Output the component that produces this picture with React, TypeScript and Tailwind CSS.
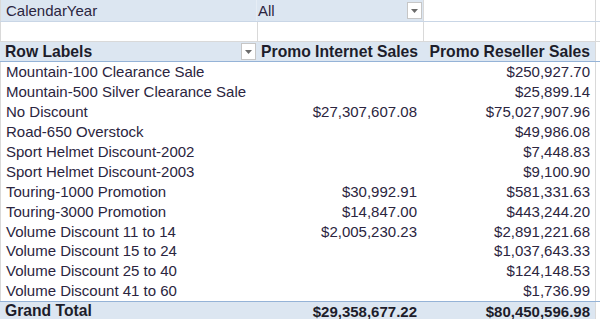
const rows: [string, string, string][] = [
  ["Mountain-100 Clearance Sale", "", "$250,927.70"],
  ["Mountain-500 Silver Clearance Sale", "", "$25,899.14"],
  ["No Discount", "$27,307,607.08", "$75,027,907.96"],
  ["Road-650 Overstock", "", "$49,986.08"],
  ["Sport Helmet Discount-2002", "", "$7,448.83"],
  ["Sport Helmet Discount-2003", "", "$9,100.90"],
  ["Touring-1000 Promotion", "$30,992.91", "$581,331.63"],
  ["Touring-3000 Promotion", "$14,847.00", "$443,244.20"],
  ["Volume Discount 11 to 14", "$2,005,230.23", "$2,891,221.68"],
  ["Volume Discount 15 to 24", "", "$1,037,643.33"],
  ["Volume Discount 25 to 40", "", "$124,148.53"],
  ["Volume Discount 41 to 60", "", "$1,736.99"],
]

function Dropdown() {
  return (
    <div className="flex h-[17px] w-[15px] shrink-0 items-center justify-center border border-[#c6c6c6] bg-white">
      <svg width="7" height="4" viewBox="0 0 7 4">
        <path d="M0 0h7L3.5 4z" fill="#6b6b6b" />
      </svg>
    </div>
  )
}

export default function App() {
  const cols = "grid grid-cols-[257px_166px_172px_1fr]"
  return (
    <div className="h-[319px] w-[600px] overflow-hidden bg-white text-[15px] leading-none text-[#2b2540] font-['Liberation_Sans',Arial,sans-serif]">
      {/* filter row */}
      <div className={`${cols} h-[22px] border-b border-[#c9d6e6]`}>
        <div className="flex items-center bg-[#dce6f1] pl-[5px] border-l border-[#d9d9d9] border-r border-r-[#e6edf5]">CalendarYear</div>
        <div className="flex items-center justify-between bg-[#dce6f1] pl-[1px] pr-[1px]">
          <span>All</span>
          <Dropdown />
        </div>
        <div className="border-l border-[#d9d9d9]" />
        <div className="border-l border-[#d9d9d9]" />
      </div>
      {/* blank row */}
      <div className={`${cols} h-[20px] border-b border-[#d9d9d9]`}>
        <div className="border-l border-[#d9d9d9]" />
        <div className="border-l border-[#d9d9d9]" />
        <div className="border-l border-[#d9d9d9]" />
        <div className="border-l border-[#d9d9d9]" />
      </div>
      {/* header */}
      <div className={`${cols} h-[20px] whitespace-nowrap border-b border-[#95b3d7] text-[15.7px] font-bold text-[#1d1d2b]`}>
        <div className="flex items-center justify-between bg-[#dce6f1] pl-[5px] pr-[1px]">
          <span>Row Labels</span>
          <Dropdown />
        </div>
        <div className="flex items-center justify-end bg-[#dce6f1] pr-[5px]">Promo Internet Sales</div>
        <div className="flex items-center justify-end bg-[#dce6f1] pr-[5px]">Promo Reseller Sales</div>
        <div className="border-l border-[#d9d9d9]" />
      </div>
      {rows.map(([label, a, b]) => (
        <div key={label} className={`${cols} h-[19.9px] whitespace-nowrap`}>
          <div className="flex items-center pl-[5px] border-l border-[#d9d9d9]">{label}</div>
          <div className="flex items-center justify-end pr-[6px]">{a}</div>
          <div className="flex items-center justify-end pr-[5px]">{b}</div>
          <div className="border-l border-[#d9d9d9]" />
        </div>
      ))}
      <div className={`${cols} h-[20px] whitespace-nowrap border-t border-[#95b3d7] font-bold text-[#1d1d2b]`}>
        <div className="flex items-center bg-[#dce6f1] pl-[5px] text-[15.7px]">Grand Total</div>
        <div className="flex items-center justify-end bg-[#dce6f1] pr-[6px]">$29,358,677.22</div>
        <div className="flex items-center justify-end bg-[#dce6f1] pr-[5px]">$80,450,596.98</div>
        <div className="border-l border-[#d9d9d9]" />
      </div>
    </div>
  )
}
